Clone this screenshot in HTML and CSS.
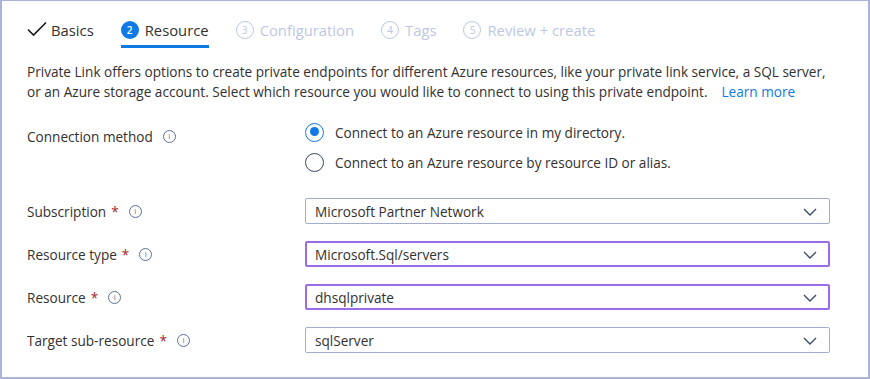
FILE: index.html
```html
<!DOCTYPE html>
<html>
<head>
<meta charset="utf-8">
<link rel="stylesheet" href="styles.css">
</head>
<body>
<div class="frame">
  <nav class="tabs">
    <div class="tab done">
      <svg class="check" width="20" height="16" viewBox="0 0 20 16"><path d="M1 8.5 L6.5 14 L19 1.5" fill="none" stroke="#1b1a19" stroke-width="1.6"/></svg>
      <span>Basics</span>
    </div>
    <div class="tab active">
      <span class="num">2</span>
      <span>Resource</span>
    </div>
    <div class="tab off"><span class="num">3</span><span>Configuration</span></div>
    <div class="tab off"><span class="num">4</span><span>Tags</span></div>
    <div class="tab off"><span class="num">5</span><span>Review + create</span></div>
  </nav>

  <p class="intro"><span>Private Link offers options to create private endpoints for different Azure resources, like your private link service, a SQL server, or an Azure storage account. Select which resource you would like to connect to using this private endpoint.</span><a class="link">Learn more</a></p>

  <div class="row method">
    <div class="label">Connection method <span class="info">i</span></div>
    <div class="radios">
      <label class="radio"><span class="dot on"></span>Connect to an Azure resource in my directory.</label>
      <label class="radio"><span class="dot"></span>Connect to an Azure resource by resource ID or alias.</label>
    </div>
  </div>

  <div class="row field">
    <div class="label">Subscription <span class="req">*</span> <span class="info">i</span></div>
    <div class="select">Microsoft Partner Network<svg class="chev" width="14" height="8" viewBox="0 0 14 8"><path d="M1 1 L7 7 L13 1" fill="none" stroke="#3b4a6b" stroke-width="1.4"/></svg></div>
  </div>
  <div class="row field">
    <div class="label">Resource type <span class="req">*</span> <span class="info">i</span></div>
    <div class="select focus">Microsoft.Sql/servers<svg class="chev" width="14" height="8" viewBox="0 0 14 8"><path d="M1 1 L7 7 L13 1" fill="none" stroke="#3b4a6b" stroke-width="1.4"/></svg></div>
  </div>
  <div class="row field">
    <div class="label">Resource <span class="req">*</span> <span class="info">i</span></div>
    <div class="select focus">dhsqlprivate<svg class="chev" width="14" height="8" viewBox="0 0 14 8"><path d="M1 1 L7 7 L13 1" fill="none" stroke="#3b4a6b" stroke-width="1.4"/></svg></div>
  </div>
  <div class="row field">
    <div class="label">Target sub-resource <span class="req">*</span> <span class="info">i</span></div>
    <div class="select">sqlServer<svg class="chev" width="14" height="8" viewBox="0 0 14 8"><path d="M1 1 L7 7 L13 1" fill="none" stroke="#3b4a6b" stroke-width="1.4"/></svg></div>
  </div>
</div>
</body>
</html>
```

FILE: styles.css
```css
* { box-sizing: border-box; }
html, body { margin: 0; padding: 0; background: #fff; }
body {
  font-family: "Open Sans", "Noto Sans", sans-serif;
  font-size: 13.6px;
  color: #323130;
}
.frame {
  width: 870px;
  height: 379px;
  border: 2px solid #aab4d6;
  border-top-width: 1px;
  padding: 0 0 0 25px;
  overflow: hidden;
}
.tabs {
  display: flex;
  align-items: center;
  height: 47px;
}
.tab {
  display: flex;
  align-items: center;
  gap: 6px;
  height: 100%;
  font-size: 14.8px;
  margin-right: 27px;
  padding-top: 14px;
  border-bottom: 3px solid transparent;
}
.tab.done { gap: 4px; color: #323130; }
.tab.active { border-bottom-color: #0f7ae5; color: #323130; }
.tab.off { color: #bcc7e6; }
.num {
  width: 18px;
  height: 18px;
  border-radius: 50%;
  display: inline-flex;
  align-items: center;
  justify-content: center;
  font-size: 10px;
  font-weight: 600;
}
.active .num { background: #0f7ae5; color: #fff; }
.off .num { border: 1px solid #bcc7e6; color: #bcc7e6; font-weight: 400; }
.check { margin-top: -2px; }

.intro {
  margin: 14px 0 0;
  width: 800px;
  line-height: 20px;
  color: #323130;
}
.link { color: #0f7ae5; margin-left: 14px; display: inline-block; }

.row { display: flex; }
.label {
  width: 278px;
  display: flex;
  align-items: center;
}
.req { color: #a4262c; margin-left: 5px; }
.info {
  display: inline-flex;
  align-items: center;
  justify-content: center;
  width: 13px;
  height: 13px;
  border: 1px solid #5d6f96;
  border-radius: 50%;
  font-size: 8px;
  color: #5d6f96;
  margin-left: 10px;
  line-height: 1;
}
.method { margin-top: 20px; }
.method .label { align-self: flex-start; height: 20px; margin-top: 4px; }
.radios { display: flex; flex-direction: column; gap: 10px; }
.radio { display: flex; align-items: center; gap: 11px; height: 20px; }
.dot {
  width: 19px;
  height: 19px;
  border-radius: 50%;
  border: 1.5px solid #3b4664;
  position: relative;
  display: inline-block;
}
.dot.on { border-color: #0f7ae5; }
.dot.on::after {
  content: "";
  position: absolute;
  left: 3.5px; top: 3.5px;
  width: 9px; height: 9px;
  border-radius: 50%;
  background: #0f7ae5;
}
.field { margin-top: 17px; height: 26px; }
.method + .field { margin-top: 26px; }
.select {
  width: 525px;
  height: 26px;
  border: 1px solid #a0acd0;
  border-radius: 2px;
  display: flex;
  align-items: center;
  padding: 0 0 0 9px;
  position: relative;
}
.select.focus { border: 2px solid #9a6ce9; padding-left: 8px; }
.chev { position: absolute; right: 12px; top: 9px; }
.select.focus .chev { right: 11px; top: 8px; }
```
